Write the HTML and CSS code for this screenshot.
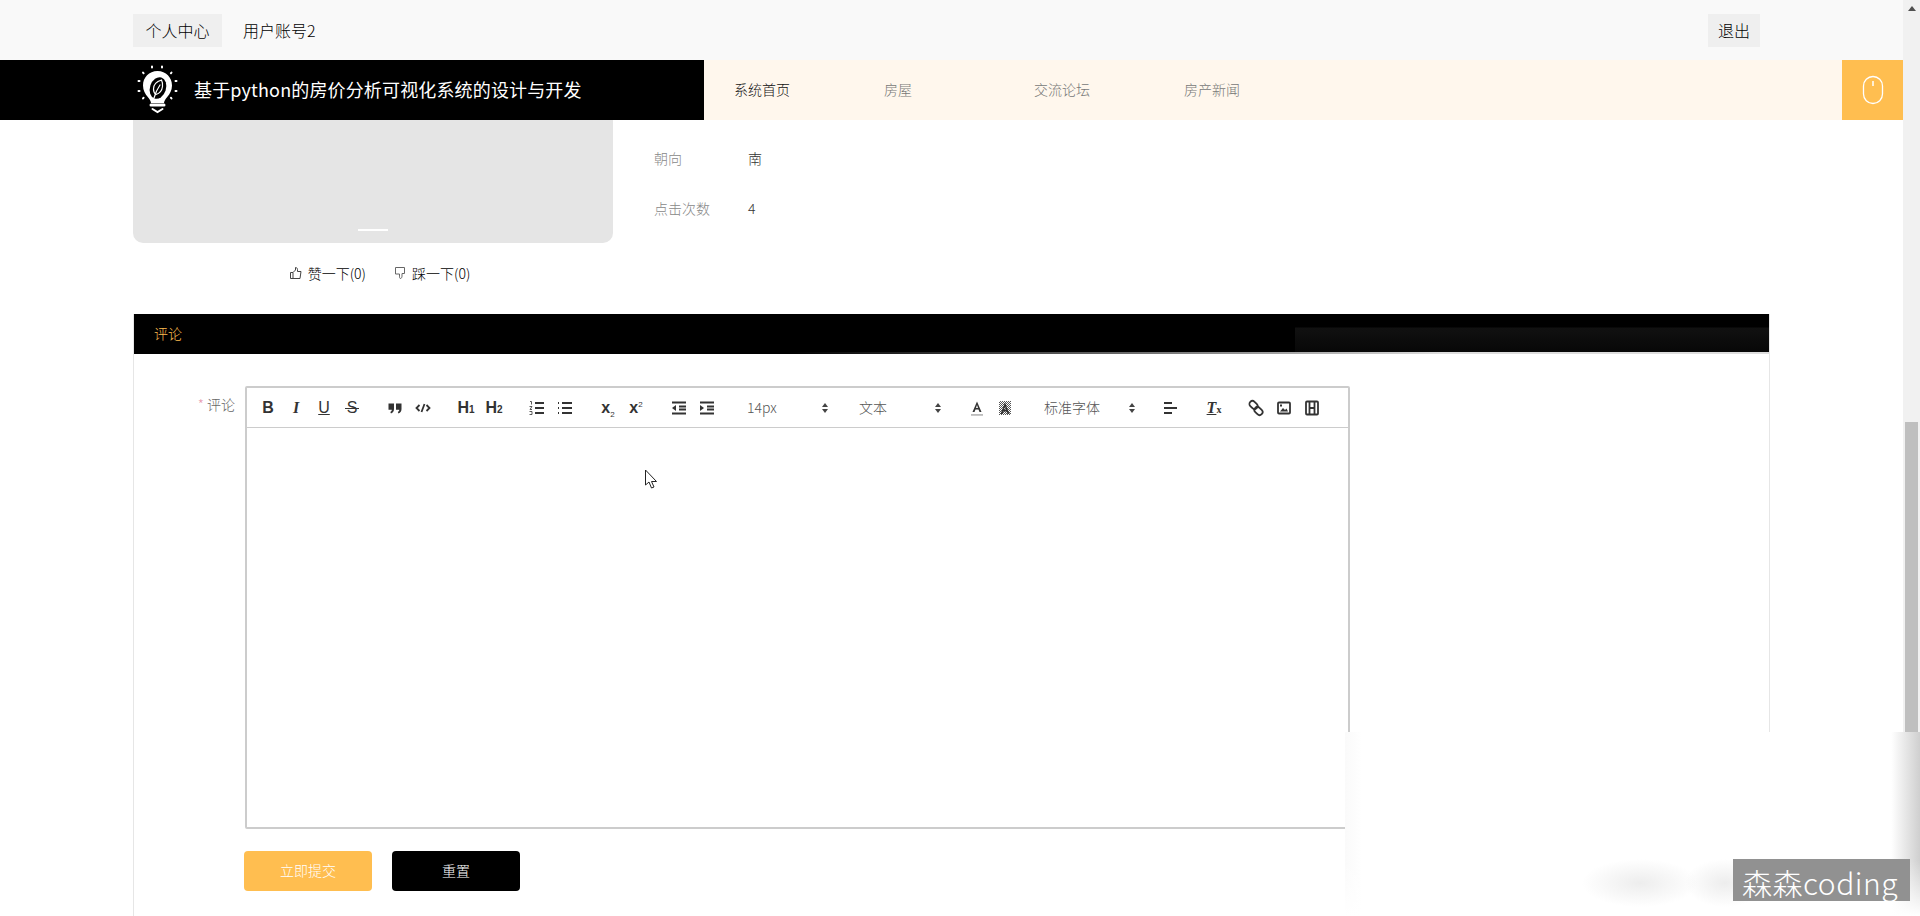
FILE: index.html
```html
<!doctype html>
<html>
<head>
<meta charset="utf-8">
<title>房屋详情</title>
<link rel="stylesheet" href="styles.css">
</head>
<body>
<div class="window">
  <div class="page">
    <div class="topbar">
      <div class="topbar-left">
        <span class="top-btn">个人中心</span>
        <span class="top-user">用户账号2</span>
      </div>
      <span class="top-btn logout">退出</span>
    </div>
    <div class="navbar">
      <div class="brand">
        <svg class="brand-logo" viewBox="0 0 60 58" fill="none" stroke="#fff" stroke-linecap="round">
          <path d="M27.500 10C19 10 13 16.500 13 24.500c0 5 2.300 8.500 4.800 11.500 1.700 2 3 3.800 3.200 6h13c.2-2.200 1.500-4 3.200-6 2.500-3 4.800-6.500 4.800-11.500C42 16.500 36 10 27.500 10z" fill="#fff" stroke="none"/>
          <ellipse cx="28" cy="27" rx="8" ry="11" transform="rotate(18 28 27)" fill="#000" stroke="none"/>
          <path d="M31.500 19c-5 1.500-8 5-8 9 0 2.500 1 4.500 2.500 5.500 3.500-1 6-4 6.500-8 .2-2.500 0-4.500-1-6.500z" stroke-width="1.200"/>
          <path d="M24 37c1.500-5 3.500-9.500 6-13" stroke-width="1.200"/>
          <path d="M21 44h13" stroke-width="3"/>
          <path d="M22.500 48l5 3 5-3" stroke-width="2"/>
          <path d="M22 5.500v1M32 5.500v1M13 11.500l.6.8M41.500 11.500l-.6.8M8.500 20h1M45.500 20h1M8.500 30h1M45.500 30h1M13 37.500l.6-.8M41.500 37.500l-.6-.8" stroke-width="2"/>
        </svg>
        <span class="brand-name">基于python的房价分析可视化系统的设计与开发</span>
      </div>
      <div class="menu">
        <a class="menu-item active">系统首页</a>
        <a class="menu-item">房屋</a>
        <a class="menu-item">交流论坛</a>
        <a class="menu-item">房产新闻</a>
      </div>
      <div class="mouse-box">
        <svg width="22" height="30" viewBox="0 0 22 30" fill="none" stroke="#fff" stroke-width="1.300">
          <rect x="1.500" y="1.500" width="19" height="27" rx="9.500"/>
          <path d="M11 6v5" stroke-width="1.500"/>
        </svg>
      </div>
    </div>

    <div class="content">
      <div class="detail">
        <div class="gallery-col">
          <div class="gallery"><span class="gallery-dot"></span></div>
          <div class="votes">
            <span class="vote">
              <svg width="12" height="12" viewBox="0 0 12 12" fill="none" stroke="#444"><path d="M.500 5.500h2.500v6H.500zM3 5.500l2.500-2.500V.500c1.200 0 2 .8 2 2v2h3.500l-1 7H3"/></svg>
              赞一下(0)
            </span>
            <span class="vote">
              <svg width="12" height="12" viewBox="0 0 12 12" fill="none" stroke="#666"><path d="M1.500.500h9v6H8v2.500c0 1-.5 2.500-1.500 2.500s-1-1.500-1-2.500V7h-4z"/></svg>
              踩一下(0)
            </span>
          </div>
        </div>
        <div class="attrs">
          <div class="attr"><span class="attr-name">朝向</span><span class="attr-val">南</span></div>
          <div class="attr"><span class="attr-name">点击次数</span><span class="attr-val">4</span></div>
        </div>
      </div>

      <div class="panel">
        <div class="panel-head">评论</div>
        <div class="panel-body">
          <div class="form-row">
            <label class="form-label"><i>*</i> 评论</label>
            <div class="editor">
              <div class="toolbar">
                <span class="group">
                  <b class="tool t-b">B</b><b class="tool t-i">I</b><span class="tool t-u">U</span><span class="tool t-s">S</span>
                </span>
                <span class="group">
                  <svg class="ico" viewBox="0 0 18 18"><path d="M2.500 4.500h5.500v5.500c0 2-1 3.500-3 4.500l-.7-1.500c1-.5 1.500-1.200 1.500-2.200H2.500zM10 4.500h5.500v5.500c0 2-1 3.500-3 4.500l-.7-1.500c1-.5 1.500-1.200 1.500-2.200H10z"/></svg>
                  <svg class="ico line" viewBox="0 0 18 18"><path d="M5.500 6L2.500 9l3 3M12.500 6l3 3-3 3M10.500 5l-3 8"/></svg>
                </span>
                <span class="group">
                  <span class="tool t-h">H<small>1</small></span><span class="tool t-h">H<small>2</small></span>
                </span>
                <span class="group">
                  <svg class="ico line" viewBox="0 0 18 18"><path d="M7 4h9M7 9h9M7 14h9"/><path class="thin" d="M2 2.500h1.500v3M1.500 7.500h2.500L2 10.500h2M1.500 12.500h2.500v3H1.500"/></svg>
                  <svg class="ico line" viewBox="0 0 18 18"><path d="M6 4h10M6 9h10M6 14h10M2 4h1M2 9h1M2 14h1"/></svg>
                </span>
                <span class="group">
                  <span class="tool t-x">x<sub>2</sub></span><span class="tool t-x">x<sup>2</sup></span>
                </span>
                <span class="group">
                  <svg class="ico line" viewBox="0 0 18 18"><path d="M2 3.500h14M9 7.500h7M9 10.500h7M2 14.500h14"/><path class="fill" d="M6 6v6L2 9z"/></svg>
                  <svg class="ico line" viewBox="0 0 18 18"><path d="M2 3.500h14M9 7.500h7M9 10.500h7M2 14.500h14"/><path class="fill" d="M2 6v6l4-3z"/></svg>
                </span>
                <span class="picker p-size">14px<i class="updown"></i></span>
                <span class="picker p-head">文本<i class="updown"></i></span>
                <span class="group g-color">
                  <svg class="ico" viewBox="0 0 18 18"><path d="M9 2.500L13.500 13h-2l-1-2.500h-3L6.500 13h-2zM8 9h2L9 6z"/><rect class="under" x="3" y="15" width="12" height="1.800"/></svg>
                  <svg class="ico" viewBox="0 0 18 18"><defs><pattern id="dots" width="2" height="2" patternUnits="userSpaceOnUse"><rect width="1" height="1" fill="#555"/><rect x="1" y="1" width="1" height="1" fill="#555"/></pattern></defs><rect x="3" y="2" width="12" height="14" fill="url(#dots)"/><path d="M9 3.500L13.500 15h-2l-1-2.500h-3L6.500 15h-2zM8 10.500h2L9 7.500z"/></svg>
                </span>
                <span class="picker p-font">标准字体<i class="updown"></i></span>
                <span class="group g-align">
                  <svg class="ico line" viewBox="0 0 18 18"><path d="M3 4h8M3 9h13M3 14h8"/></svg>
                </span>
                <span class="group g-clean">
                  <span class="tool t-clean"><u>T</u><small>x</small></span>
                </span>
                <span class="group g-media">
                  <svg class="ico line" viewBox="0 0 18 18"><rect x="2" y="3" width="9" height="6" rx="3" transform="rotate(45 6.500 6)"/><rect x="7" y="9" width="9" height="6" rx="3" transform="rotate(45 11.500 12)"/></svg>
                  <svg class="ico line" viewBox="0 0 18 18"><rect x="3" y="3.500" width="12" height="11" rx="1"/><path class="fill" d="M5 12.500l3-3.500 2 2 1.500-1.500 1.500 3zM5 5.500h2v2H5z"/></svg>
                  <svg class="ico line" viewBox="0 0 18 18"><rect x="3" y="2.500" width="12" height="13" rx="1"/><path d="M6.500 3v12M11.500 3v12M7 9h4"/></svg>
                </span>
              </div>
              <div class="editor-area"></div>
            </div>
          </div>
          <div class="form-actions">
            <button class="btn btn-submit">立即提交</button>
            <button class="btn btn-reset">重置</button>
          </div>
        </div>
      </div>
    </div>
  </div>
  <div class="scrollbar">
    <span class="arrow"></span>
    <div class="thumb"></div>
  </div>
</div>

<!-- things lying over the page -->
<svg class="cursor" width="16" height="22" viewBox="0 0 16 22"><path d="M1.500 1v15l3.500-3 2.500 6 2.500-1-2.500-5.500h5z" fill="#fff" stroke="#222"/></svg>
<div class="smudge"></div>
<div class="watermark">森森coding</div>
</body>
</html>
```
FILE: styles.css
```css
* { box-sizing: border-box; }
html, body { margin: 0; padding: 0; height: 100%; overflow: hidden; }
body {
    background: #fff;
    color: #333;
    font-family: "Noto Sans CJK SC", "Liberation Sans", sans-serif;
    font-size: 14px;
}
.window { display: flex; height: 916px; }
.page { flex: 1; min-width: 0; overflow: hidden; }

/* top bar */
.topbar {
    height: 60px;
    background: #f9f9f9;
    display: flex;
    justify-content: space-between;
    align-items: center;
    padding: 0 143px 0 133px;
    color: #000;
    font-size: 16px;
    font-weight: 300;
}
.topbar-left { display: flex; align-items: center; gap: 21px; }
.top-btn {
    background: #efefef;
    height: 33px;
    line-height: 32px;
    padding: 0 12.500px;
}
.top-user { line-height: 32px; height: 33px; }
.logout { padding: 0 10px; }

/* nav */
.navbar { height: 60px; display: flex; }
.brand {
    width: 704px;
    background: #000;
    color: #fff;
    display: flex;
    align-items: center;
    padding-left: 130px;
    gap: 4px;
}
.brand-logo { width: 60px; height: 58px; flex: none; }
.brand-name { font-size: 18px; letter-spacing: .15px; white-space: nowrap; padding-bottom: 2px; }
.menu {
    flex: 1;
    background: #fff7ed;
    display: flex;
    align-items: center;
    padding: 0 0 2px 30px;
}
.menu-item { width: 150px; font-size: 14px; font-weight: 300; color: #777; }
.menu-item.active { color: #111; }
.mouse-box {
    width: 61px;
    background: #ffbe50;
    display: flex;
    align-items: center;
    justify-content: center;
}

/* house detail */
.content { padding: 0 133px; }
.detail { display: flex; }
.gallery-col { width: 480px; }
.gallery {
    height: 123px;
    background: #e5e5e5;
    border-radius: 0 0 10px 10px;
    display: flex;
    justify-content: center;
    align-items: flex-end;
    padding-bottom: 12px;
}
.gallery-dot { width: 30px; height: 2px; background: #fff; }
.votes {
    display: flex;
    justify-content: center;
    gap: 28px;
    height: 71px;
    padding: 20px 0 0 14px;
    font-size: 14px;
    font-weight: 300;
    color: #000;
}
.vote { display: flex; align-items: center; gap: 6px; height: 20px; }
.attrs { padding: 28px 0 0 41px; }
.attr { display: flex; height: 50px; font-size: 14px; font-weight: 300; }
.attr-name { width: 94px; color: #888; }
.attr-val { color: #333; }

/* comment panel */
.panel {
    width: 1637px;
    border: 1px solid #e6e6e6;
    border-top: 0;
    border-bottom: 0;
    height: 602px;
}
.panel-head {
    height: 40px;
    background: linear-gradient(#000 13px, #111 14px, #070707 100%) right / 29% 100% no-repeat, #000;
    color: #ffbe50;
    font-size: 14px;
    font-weight: 300;
    line-height: 39px;
    padding-left: 20px;
    border-bottom: 2px solid;
    border-image: linear-gradient(to right, #000 40%, #666 60%, #ddd 80%) 1;
}
.panel-body { padding: 32px 0 0; }
.form-row { display: flex; }
.form-label {
    width: 111px;
    padding: 8px 10px 0 0;
    text-align: right;
    font-size: 14px;
    font-weight: 300;
    color: #666;
    line-height: 20px;
}
.form-label i { color: #e89ab0; font-style: normal; }

/* editor */
.editor { width: 1105px; border: 2px solid #ccc; border-radius: 2px; }
.toolbar {
    height: 40px;
    border-bottom: 1px solid #ccc;
    display: flex;
    align-items: center;
    padding-left: 7px;
    color: #333;
}
.group { display: flex; margin-right: 15px; }
.tool {
    width: 28px;
    height: 18px;
    line-height: 18px;
    text-align: center;
    font-family: "Liberation Sans", sans-serif;
    font-size: 16px;
    color: #333;
    font-style: normal;
}
.t-i { font-style: italic; font-family: "Liberation Serif", serif; }
.t-u { text-decoration: underline; }
.t-s { position: relative; }
.t-s::after {
    content: "";
    position: absolute;
    left: 7px;
    right: 7px;
    top: 9px;
    height: 1.500px;
    background: #333;
}
.t-h { font-weight: 600; }
.t-h small { font-size: 10px; }
.t-x { font-weight: 700; }
.t-x sub, .t-x sup { font-size: 8px; font-weight: 400; line-height: 0; }
.t-clean { font-style: italic; font-family: "Liberation Serif", serif; font-weight: 700; }
.t-clean small { font-size: 10px; font-style: normal; }
.ico { width: 18px; height: 18px; margin: 0 5px; fill: #333; flex: none; }
.ico.line { fill: none; stroke: #333; stroke-width: 1.800; }
.ico .thin { stroke-width: .8; }
.ico .fill { fill: #333; stroke: none; }
.ico .under { fill: #bbb; }
.picker {
    display: flex;
    align-items: center;
    justify-content: space-between;
    font-size: 14px;
    font-weight: 300;
    color: #555;
    padding: 0 0 2px 11px;
}
.p-size { width: 92px; margin-right: 20px; }
.p-head { width: 93px; margin-right: 22px; }
.p-font { width: 102px; margin-left: 14px; margin-right: 21px; }
.updown { display: flex; flex-direction: column; gap: 2px; width: 6px; margin-top: 2px; }
.updown::before, .updown::after { content: ""; border-left: 3px solid transparent; border-right: 3px solid transparent; }
.updown::before { border-bottom: 4px solid #444; }
.updown::after { border-top: 4px solid #444; }
.g-color { margin-right: 0; }
.g-align { margin-right: 16px; }
.g-clean { margin-right: 14px; }
.g-media { margin-right: 0; }
.editor-area { height: 399px; background: #fff; }

.form-actions { display: flex; gap: 20px; padding: 22px 0 0 110px; }
.btn {
    width: 128px;
    height: 40px;
    border: 0;
    border-radius: 4px;
    padding: 0 0 2px;
    font-family: inherit;
    font-size: 14px;
    font-weight: 300;
    color: #fff;
}
.btn-submit { background: #ffbe50; }
.btn-reset { background: #000; }

/* scrollbar */
.scrollbar { width: 17px; background: #f1f1f1; display: flex; flex-direction: column; align-items: center; }
.arrow { margin-top: 6px; border-left: 4px solid transparent; border-right: 4px solid transparent; border-bottom: 5px solid #505050; }
.thumb { width: 13px; height: 477px; margin-top: 411px; background: #bfbfbf; }

/* overlays */
.cursor { position: absolute; left: 644px; top: 469px; }
.smudge {
    position: absolute;
    left: 1345px;
    top: 732px;
    width: 575px;
    height: 184px;
    background:
        radial-gradient(ellipse 58px 24px at 295px 151px, #ededed, rgba(255,255,255,0)),
        radial-gradient(ellipse 40px 24px at 380px 151px, #ededed, rgba(255,255,255,0)),
        linear-gradient(to top, #fff, rgba(255,255,255,0) 30%),
        linear-gradient(to right, #fafafa, #fff 3%, #fff 95%, #e2e2e2 98%, #cfcfcf 100%);
}
.watermark {
    position: absolute;
    left: 1733px;
    top: 859px;
    width: 177px;
    height: 42px;
    background: #919191;
    color: #fff;
    font-size: 30px;
    font-weight: 300;
    letter-spacing: .5px;
    line-height: 46px;
    padding-left: 9px;
    white-space: nowrap;
}
```
